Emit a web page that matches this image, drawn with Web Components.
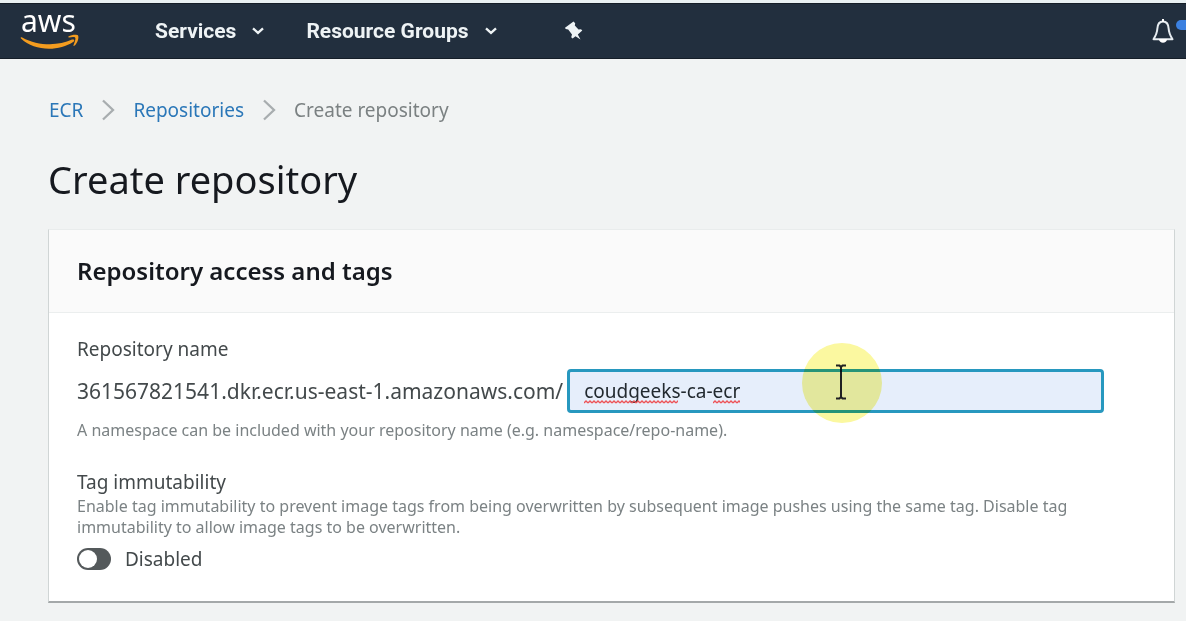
<!DOCTYPE html>
<html lang="en">
<head>
<meta charset="utf-8">
<title>Create repository</title>
<style>
  body { margin: 0; background: #f1f3f3; font-family: "Noto Sans", "Open Sans", sans-serif; color: #16191f; }
</style>
</head>
<body>
<ecr-app></ecr-app>

<template id="t-app">
  <style>
    :host { display: block; }
    main { padding: 36px 11px 18px 48px; }
    h1 { margin: 28px 0 24px; font-size: 38px; line-height: 52px; font-weight: 400; color: #16191f; }
  </style>
  <aws-header></aws-header>
  <main>
    <bread-crumbs></bread-crumbs>
    <h1>Create repository</h1>
    <form-panel>
      <span slot="title">Repository access and tags</span>
      <repo-name-field></repo-name-field>
      <toggle-field></toggle-field>
    </form-panel>
  </main>
</template>

<template id="t-header">
  <style>
    :host { display: block; border-top: 3px solid #e9f1f3; }
    header { display: flex; align-items: center; height: 56px; padding-left: 20px; background: #222f3e; box-shadow: inset 0 1px #151e28, inset 0 -1px #151e28; color: #eef3f5; }
    .logo { display: grid; width: 60px; margin-right: 75px; color: #fff; text-decoration: none; font: 400 30px/34px "Noto Sans", sans-serif; }
    .logo span { padding-left: 1px; height: 30px; margin-top: -8px; }
    .logo svg { display: block; }
    nav { display: flex; flex: 1; align-items: center; }
    button { display: flex; align-items: center; gap: 16px; border: 0; padding: 0; margin-right: 42px; background: none; color: inherit; font: 700 21px/24px Roboto, sans-serif; }
    .pin { margin-left: 25px; }
    .bell { position: relative; margin: 0; width: 35px; }
    .dot { position: absolute; right: 0; top: 2px; width: 10px; height: 10px; border-radius: 5px 0 0 5px; background: #3b80e0; }
  </style>
  <header>
    <a class="logo" href="#" aria-label="AWS home"><span>aws</span>
      <svg width="60" height="17" viewBox="0 0 60 17" fill="#f39c1f"><path d="M1 4.500C0 3.600 1 2.700 2.200 3.400C18 12 38 12.200 52 5.600C54 4.900 55.200 6.500 53.500 7.700C38 18 14 17 1 4.500Z"/><path d="M48.500 2.600C51 .8 56.800 .2 58 1.400C59.200 3 57.700 8.800 54.700 11.500C53.800 12.300 53.200 11.900 53.600 10.900C54.600 8.300 56 4.800 55.200 3.700C54.400 2.600 51.400 3.100 49.200 3.400C48.200 3.500 47.900 3.100 48.500 2.600Z"/></svg>
    </a>
    <nav>
      <button>Services <svg width="12" height="8" viewBox="0 0 12 8" fill="none" stroke="currentColor" stroke-width="2.300"><path d="M1 1.300L6 5.900L11 1.300"/></svg></button>
      <button>Resource Groups <svg width="12" height="8" viewBox="0 0 12 8" fill="none" stroke="currentColor" stroke-width="2.300"><path d="M1 1.300L6 5.900L11 1.300"/></svg></button>
      <button class="pin" aria-label="Pin shortcuts"><svg width="20" height="22" viewBox="0 0 20 22" fill="currentColor"><path d="M9.500 1.500L11.200 3.200L10.800 5.500L14.500 9.500L17 9.300L18.300 10.500L13.800 14.500L16.500 19.500L11.500 16.200L8.600 18.500L7.200 17.200L8 14.600L4.200 9.400L1.700 9L1 7.800Z"/></svg></button>
    </nav>
    <button class="bell" aria-label="Notifications"><svg width="24" height="26" viewBox="0 0 24 26"><path d="M12 3.500C7.500 3.500 6.500 7 6.300 11C6.100 15 4.500 18 2.500 21.200H21.500C19.500 18 17.900 15 17.700 11C17.500 7 16.500 3.500 12 3.500Z" fill="none" stroke="#e6ecf0" stroke-width="2" stroke-linejoin="round"/><path d="M11 1H13V4H11ZM8 21H16C16 26 8 26 8 21Z" fill="#fff"/></svg><span class="dot"></span></button>
  </header>
</template>

<template id="t-crumbs">
  <style>
    :host { display: block; padding-left: 1px; font-size: 19px; line-height: 30px; }
    ol { display: flex; align-items: center; margin: 0; padding: 0; list-style: none; }
    li { display: flex; align-items: center; color: #7b8182; }
    a { color: #2b77b8; text-decoration: none; }
    svg { margin: 0 18px; }
  </style>
  <nav aria-label="Breadcrumb"><ol>
    <li><a href="#">ECR</a><svg width="14" height="22" viewBox="0 0 14 22" fill="none" stroke="#a8adaf" stroke-width="2.300"><path d="M2 1.500L12 11L2 20.500"/></svg></li>
    <li><a href="#">Repositories</a><svg width="14" height="22" viewBox="0 0 14 22" fill="none" stroke="#a8adaf" stroke-width="2.300"><path d="M2 1.500L12 11L2 20.500"/></svg></li>
    <li aria-current="page">Create repository</li>
  </ol></nav>
</template>

<template id="t-panel">
  <style>
    :host { display: block; background: #fff; border: 1px solid #d0d5d5; border-top-color: #e9ecec; border-bottom: 2px solid #a4a8a9; }
    h2 { margin: 0; padding: 24px 28px; font-size: 24px; line-height: 34px; font-weight: 600; background: #fafafa; border-bottom: 1px solid #ebeeee; }
    .body { padding: 21px 28px 27px; }
  </style>
  <h2><slot name="title"></slot></h2>
  <div class="body"><slot></slot></div>
</template>

<template id="t-name">
  <style>
    :host { display: block; color: #43494b; }
    label { display: block; font-size: 19px; line-height: 30px; }
    .row { display: flex; align-items: center; gap: 4px; margin: 5px 42px 4px 0; font-size: 21px; line-height: 30px; }
    .box { position: relative; flex: 1; display: flex; }
    input { box-sizing: border-box; width: 100%; height: 44px; padding: 0 14px; border: 3px solid #2798bf; border-radius: 4px; outline: 0; background: #e6eefb; color: #22292f; font: 400 19px/28px "Noto Sans", sans-serif; }
    .wave { position: absolute; top: 31px; height: 4px; }
    .w1 { left: 17px; width: 94px; }
    .w2 { left: 146px; width: 27px; }
    .pointer { position: absolute; left: 234px; top: -28px; mix-blend-mode: multiply; }
    .hint { margin: 0; font-size: 16px; line-height: 26px; color: #7b8284; }
  </style>
  <label for="name">Repository name</label>
  <div class="row">
    <span>361567821541.dkr.ecr.us-east-1.amazonaws.com/</span>
    <div class="box">
      <input id="name" value="coudgeeks-ca-ecr" spellcheck="false" aria-describedby="hint">
      <svg class="wave w1"><defs><pattern id="z" width="4" height="4" patternUnits="userSpaceOnUse"><path d="M0 3L2 1L4 3" fill="none" stroke="#ed5358" stroke-width="1.300"/></pattern></defs><rect width="100%" height="4" fill="url(#z)"/></svg>
      <svg class="wave w2"><rect width="100%" height="4" fill="url(#z)"/></svg>
      <svg class="pointer" width="84" height="84" viewBox="0 0 84 84"><circle cx="41" cy="42" r="40" fill="#fbf8a0"/><path d="M35 24.500H38.500L40 26L41.500 24.500H45M40 26V56M35 57.500H38.500L40 56L41.500 57.500H45" fill="none" stroke="#222" stroke-width="2"/></svg>
    </div>
  </div>
  <p class="hint" id="hint">A namespace can be included with your repository name (e.g. namespace/repo-name).</p>
</template>

<template id="t-toggle">
  <style>
    :host { display: block; margin-top: 25px; color: #43494b; }
    h3 { margin: 0; font-size: 19px; line-height: 28px; font-weight: 400; }
    p { margin: 0 48px 0 0; font-size: 16px; line-height: 21px; color: #7b8284; }
    label { display: flex; align-items: center; gap: 14px; margin-top: 6px; font-size: 19px; line-height: 30px; }
    input { appearance: none; box-sizing: border-box; width: 34px; height: 22px; margin: 0; padding: 2px; border-radius: 11px; background: #54595b; }
    input::before { content: ""; display: block; width: 18px; height: 18px; border-radius: 50%; background: #fff; }
    input:checked { background: #1f78b8; }
    input:checked::before { margin-left: auto; }
  </style>
  <h3>Tag immutability</h3>
  <p id="d">Enable tag immutability to prevent image tags from being overwritten by subsequent image pushes using the same tag. Disable tag immutability to allow image tags to be overwritten.</p>
  <label><input type="checkbox" role="switch" aria-describedby="d"><span>Disabled</span></label>
</template>

<script>
  const define = (name, templateId) => customElements.define(name, class extends HTMLElement {
    constructor() {
      super();
      this.attachShadow({ mode: "open" }).append(document.getElementById(templateId).content.cloneNode(true));
    }
  });
  define("aws-header", "t-header");
  define("bread-crumbs", "t-crumbs");
  define("form-panel", "t-panel");
  define("repo-name-field", "t-name");
  define("toggle-field", "t-toggle");
  define("ecr-app", "t-app");
</script>
</body>
</html>
